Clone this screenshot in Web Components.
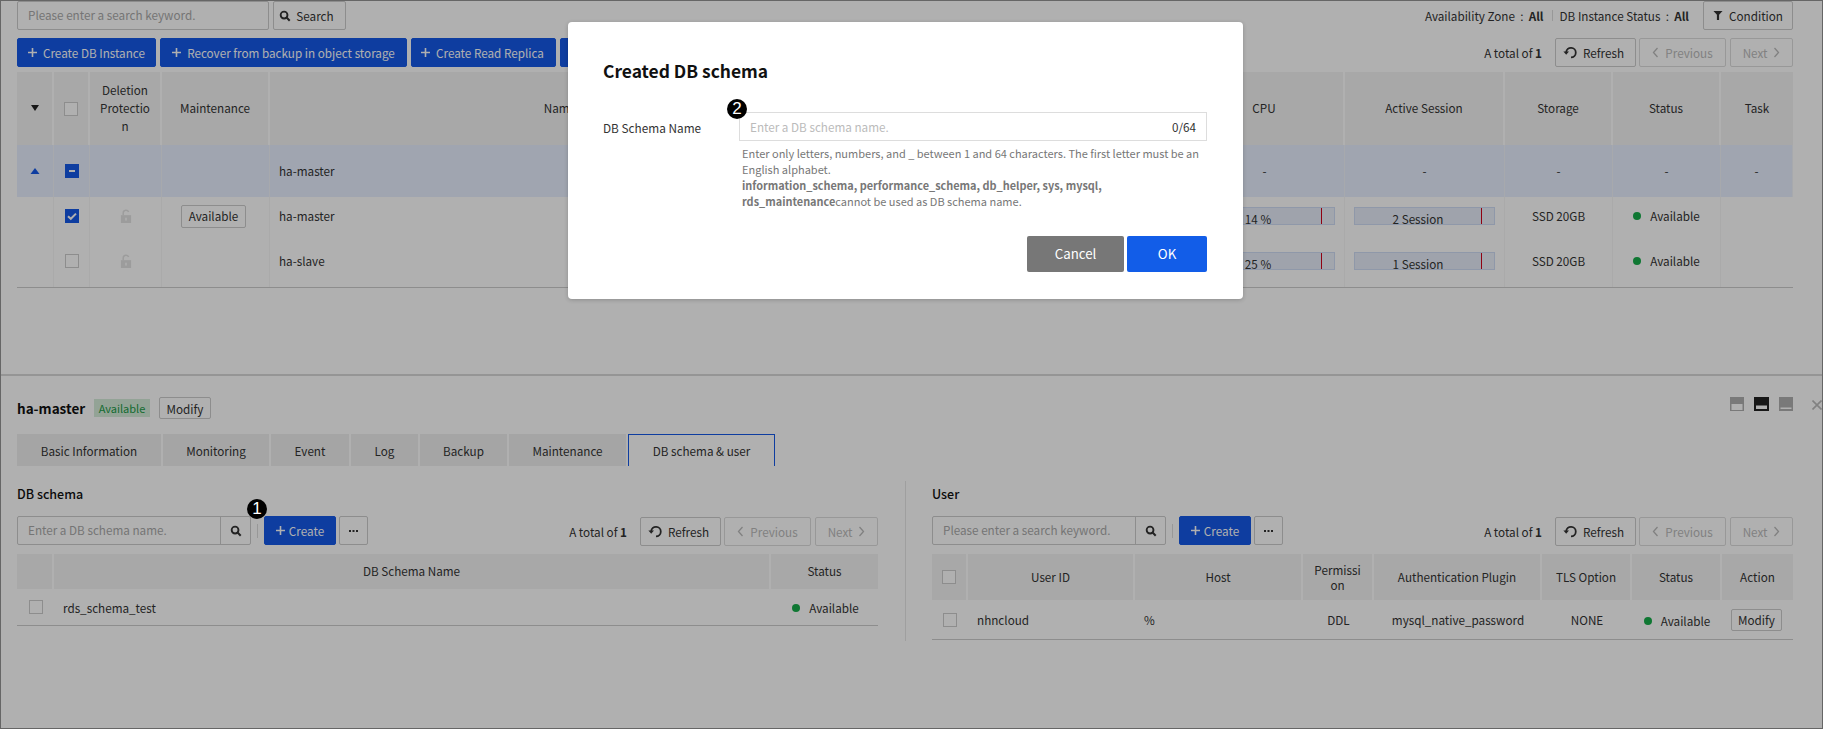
<!DOCTYPE html>
<html lang="en">
<head>
<meta charset="utf-8">
<title>DB schema</title>
<style>
html, body { margin: 0; padding: 0; }
body {
    width: 1823px;
    height: 729px;
    overflow: hidden;
    position: relative;
    background: #fff;
    color: #333;
    font-family: "Noto Sans CJK KR", "Noto Sans", sans-serif;
    font-size: 11.7px;
}
</style>
</head>
<body>
<script>
const ICONS = {
    plus: `<svg width="9" height="9" viewBox="0 0 9 9"><path d="M4.500 0v9M0 4.500h9" stroke="currentColor" stroke-width="1.6" fill="none"/></svg>`,
    search: `<svg width="12" height="12" viewBox="0 0 13 13"><circle cx="5.500" cy="5.500" r="3.700" stroke="currentColor" stroke-width="2" fill="none"/><path d="M8.200 8.200l3.400 3.400" stroke="currentColor" stroke-width="2.200"/></svg>`,
    filter: `<svg width="10" height="11" viewBox="0 0 11 12"><path d="M0.500 1h10L6.700 5.200V11H4.300V5.200z" fill="currentColor"/></svg>`,
    refresh: `<svg width="14" height="13" viewBox="0 0 14 13"><path d="M3.200 6.200A4.800 4.800 0 1 1 8 11.400" stroke="currentColor" stroke-width="1.800" fill="none"/><path d="M0.400 5.400h5.600L3.200 8.800z" fill="currentColor"/></svg>`,
    left: `<svg width="7" height="11" viewBox="0 0 7 11"><path d="M5.500 1L1.500 5.500l4 4.500" stroke="currentColor" stroke-width="1.300" fill="none"/></svg>`,
    right: `<svg width="7" height="11" viewBox="0 0 7 11"><path d="M1.500 1l4 4.500-4 4.500" stroke="currentColor" stroke-width="1.300" fill="none"/></svg>`,
    lock: `<svg width="12" height="14" viewBox="0 0 12 15"><path d="M3 7V4.200a3 3 0 0 1 5.800-1" stroke="#e3e3e3" stroke-width="1.600" fill="none"/><path d="M0.500 6.600h11V15H.5z" fill="#e3e3e3"/><rect x="5" y="9.400" width="2" height="3" fill="#f7f7f7"/></svg>`,
};

class UiBtn extends HTMLElement {
    constructor() {
        super();
        this.attachShadow({ mode: "open" }).innerHTML = `
        <style>
            :host {
                display: inline-flex;
                align-items: center;
                justify-content: center;
                gap: var(--gap, 6px);
                box-sizing: border-box;
                height: var(--h, 29px);
                padding: 0 var(--pad, 10px);
                background: #fff;
                border: 1px solid #ccc;
                border-radius: 2px;
                font-size: 11.7px;
                color: #333;
                white-space: nowrap;
            }
            :host([primary]) { background: #1559e8; border-color: #1559e8; color: #fff; }
            :host([off]) { color: #bbb; border-color: #ddd; }
        </style>
        <slot></slot>`;
    }
}
customElements.define("ui-btn", UiBtn);

class UiIcon extends HTMLElement {
    connectedCallback() {
        if (this.shadowRoot) return;
        this.attachShadow({ mode: "open" }).innerHTML = `
        <style>:host { display: inline-flex; align-items: center; } svg { display: block; }</style>
        ${ICONS[this.getAttribute("name")] || ""}`;
    }
}
customElements.define("ui-icon", UiIcon);

class UiCheck extends HTMLElement {
    connectedCallback() {
        if (this.shadowRoot) return;
        const state = this.getAttribute("state");
        const mark = state === "on"
            ? `<svg width="14" height="14" viewBox="0 0 14 14"><path d="M3 7.200l2.800 2.600L11 4.600" stroke="#fff" stroke-width="2" fill="none"/></svg>`
            : state === "part"
            ? `<svg width="14" height="14" viewBox="0 0 14 14"><path d="M4 7h6" stroke="#fff" stroke-width="2"/></svg>`
            : "";
        this.attachShadow({ mode: "open" }).innerHTML = `
        <style>
            :host {
                display: block;
                box-sizing: border-box;
                width: 14px;
                height: 14px;
                background: #fff;
                border: 1px solid #ccc;
            }
            :host([state]) { background: #1559e8; border: 0; }
            svg { display: block; }
        </style>${mark}`;
    }
}
customElements.define("ui-check", UiCheck);

class SearchBox extends HTMLElement {
    connectedCallback() {
        if (this.shadowRoot) return;
        this.attachShadow({ mode: "open" }).innerHTML = `
        <style>
            :host {
                display: flex;
                box-sizing: border-box;
                width: var(--w, 234px);
                height: 29px;
                background: #fff;
                border: 1px solid #ccc;
                border-radius: 2px;
                font-size: 11.7px;
                color: #aaa;
            }
            span { flex: 1; padding-left: var(--pl, 10px); line-height: 26px; white-space: nowrap; overflow: hidden; }
            b { width: 29px; border-left: 1px solid #ccc; display: flex; align-items: center; justify-content: center; color: #333; }
        </style>
        <span>${this.getAttribute("hint")}</span>${this.hasAttribute("plain") ? "" : `<b>${ICONS.search}</b>`}`;
    }
}
customElements.define("search-box", SearchBox);

class DataGrid extends HTMLElement {
    constructor() {
        super();
        this.attachShadow({ mode: "open" }).innerHTML = `
        <style>
            :host {
                display: grid;
                grid-template-columns: var(--cols);
                grid-template-rows: var(--rows);
                border-bottom: 1px solid #ccc;
                font-size: 11.7px;
            }
        </style>
        <slot></slot>`;
    }
}
customElements.define("data-grid", DataGrid);

class GridCell extends HTMLElement {
    constructor() {
        super();
        this.attachShadow({ mode: "open" }).innerHTML = `
        <style>
            :host {
                display: flex;
                align-items: center;
                justify-content: center;
                box-sizing: border-box;
                min-width: 0;
                text-align: center;
                line-height: 18px;
                color: #333;
            }
            :host([head]) { background: #f4f4f4; border-right: 2px solid #fff; padding: 0 8px 1px; overflow-wrap: anywhere; }
            :host([head][last]) { border-right: 0; }
            :host([sel]) { background: #e8f0ff; border-right: 1px solid #f2f5fb; }
            :host([line]) { border-right: 1px solid #f6f6f6; }
            :host([up]) { padding-bottom: 7px; }
            :host([left]) { justify-content: flex-start; padding-left: var(--cell-pad, 9px); }
        </style>
        <slot></slot>`;
    }
}
customElements.define("g-c", GridCell);

class UsageBar extends HTMLElement {
    constructor() {
        super();
        this.attachShadow({ mode: "open" }).innerHTML = `
        <style>
            :host {
                display: block;
                box-sizing: border-box;
                width: 141px;
                height: 18px;
                border: 1px solid #cfdcf5;
                background: #ebf1fb;
                font-size: 11.7px;
                color: #333;
            }
            div {
                box-sizing: border-box;
                width: calc(90% + 2px);
                height: 16px;
                background: #e6edf9;
                border-right: 1px solid #d0021b;
                text-align: center;
                line-height: 22px;
                overflow: hidden;
            }
        </style>
        <div><slot></slot></div>`;
    }
}
customElements.define("usage-bar", UsageBar);

class StatusDot extends HTMLElement {
    constructor() {
        super();
        this.attachShadow({ mode: "open" }).innerHTML = `
        <style>
            :host { display: inline-flex; align-items: center; gap: 9px; }
            i { width: 8px; height: 8px; border-radius: 50%; background: #17ad4a; }
        </style>
        <i></i><slot></slot>`;
    }
}
customElements.define("status-dot", StatusDot);

class DetailTabs extends HTMLElement {
    constructor() {
        super();
        this.attachShadow({ mode: "open" }).innerHTML = `
        <style>
            :host { display: flex; gap: 2px; height: 32px; }
        </style>
        <slot></slot>`;
    }
}
customElements.define("detail-tabs", DetailTabs);

class DetailTab extends HTMLElement {
    constructor() {
        super();
        this.attachShadow({ mode: "open" }).innerHTML = `
        <style>
            :host {
                display: flex;
                align-items: center;
                justify-content: center;
                box-sizing: border-box;
                background: #f0f0f0;
                font-size: 11.7px;
                color: #333;
            }
            :host([active]) {
                background: #fff;
                border: 1px solid #1559e8;
                border-bottom: 0;
            }
        </style>
        <slot></slot>`;
    }
}
customElements.define("detail-tab", DetailTab);

class ListTools extends HTMLElement {
    connectedCallback() {
        if (this.shadowRoot) return;
        this.attachShadow({ mode: "open" }).innerHTML = `
        <style>
            :host { display: flex; align-items: center; height: 29px; font-size: 11.7px; color: #333; }
            .grow { flex: 1; display: flex; align-items: center; }
            .sep { width: 1px; height: 14px; background: #ddd; margin: 0 6px; }
            .total { margin: 2px 13px 0 0; }
            .total b { font-weight: 700; }
            ui-btn { --pad: 0; }
            .ref { width: 81px; margin: 1px 3px 0 0; padding-right: 4px; }
            .prev { width: 87px; margin: 1px 4px 0 0; }
            .next { width: 63px; margin-top: 1px; }
            .more { width: 29px; margin-left: 3px; }
            .create { width: 72px; --gap: 4px; }
        </style>
        <div class="grow">
            <search-box hint="${this.getAttribute("hint")}"></search-box>
            <span class="sep"></span>
            <ui-btn class="create" primary><ui-icon name="plus"></ui-icon>Create</ui-btn>
            <ui-btn class="more"><svg width="9" height="2" viewBox="0 0 9 2"><path d="M0 0h2v2H0zM3.500 0h2v2h-2zM7 0h2v2H7z" fill="#333"/></svg></ui-btn>
        </div>
        <span class="total">A total of <b>1</b></span>
        <ui-btn class="ref"><ui-icon name="refresh"></ui-icon>Refresh</ui-btn>
        <ui-btn class="prev" off><ui-icon name="left"></ui-icon>Previous</ui-btn>
        <ui-btn class="next" off>Next<ui-icon name="right"></ui-icon></ui-btn>`;
    }
}
customElements.define("list-tools", ListTools);

class InstancePanel extends HTMLElement {
    constructor() {
        super();
        this.attachShadow({ mode: "open" }).innerHTML = `
        <style>
            :host {
                display: block;
                box-sizing: border-box;
                height: 374px;
                padding: 1px 30px 0 17px;
                font-size: 11.7px;
            }
            .top { display: flex; align-items: center; gap: 4px; height: 29px; }
            .top .fill { flex: 1; }
            .info { display: flex; align-items: center; color: #333; }
            .info b { font-weight: 700; }
            .info i { width: 1px; height: 11px; background: #ddd; margin: 0 7px 0 8px; }
            .actions { display: flex; align-items: center; gap: 4px; height: 29px; margin-top: 8px; }
            .actions .fill { flex: 1; }
            .actions ui-btn { --pad: 0; }
            .actions .total { margin-right: 9px; }
            .actions .total b { font-weight: 700; }
            .tbl { margin-top: 5px; }
        </style>
        <div class="top">
            <search-box plain hint="Please enter a search keyword." style="--w:252px"></search-box>
            <ui-btn style="width:73px;--gap:5px;padding:0 6px 0 0"><ui-icon name="search"></ui-icon>Search</ui-btn>
            <span class="fill"></span>
            <span class="info">Availability Zone&nbsp;&nbsp;:&nbsp;&nbsp;<b>All</b><i></i>DB Instance Status&nbsp;&nbsp;:&nbsp;&nbsp;<b>All</b></span>
            <ui-btn style="width:90px;margin-left:10px"><ui-icon name="filter"></ui-icon>Condition</ui-btn>
        </div>
        <div class="actions">
            <ui-btn primary style="width:139px"><ui-icon name="plus"></ui-icon>Create DB Instance</ui-btn>
            <ui-btn primary style="width:247px"><ui-icon name="plus"></ui-icon>Recover from backup in object storage</ui-btn>
            <ui-btn primary style="width:145px;padding-right:2px"><ui-icon name="plus"></ui-icon>Create Read Replica</ui-btn>
            <ui-btn primary style="width:60px"></ui-btn>
            <span class="fill"></span>
            <span class="total">A total of <b>1</b></span>
            <ui-btn style="width:81px;margin-right:-1px;padding-right:4px"><ui-icon name="refresh"></ui-icon>Refresh</ui-btn>
            <ui-btn off style="width:87px"><ui-icon name="left"></ui-icon>Previous</ui-btn>
            <ui-btn off style="width:63px">Next<ui-icon name="right"></ui-icon></ui-btn>
        </div>
        <div class="tbl"><slot></slot></div>`;
    }
}
customElements.define("instance-panel", InstancePanel);

class DetailPanel extends HTMLElement {
    constructor() {
        super();
        this.attachShadow({ mode: "open" }).innerHTML = `
        <style>
            :host {
                display: block;
                box-sizing: border-box;
                height: 355px;
                border-top: 2px solid #d8d8d8;
                padding: 21px 30px 0 17px;
                position: relative;
            }
            .head { display: flex; align-items: center; height: 22px; }
            .name { font-size: 13.5px; font-weight: 700; color: #111; width: 77px; }
            .badge {
                background: #d5edda;
                color: #1a9b46;
                font-size: 11px;
                height: 18px;
                line-height: 18px;
                width: 56px;
                text-align: center;
                margin-right: 9px;
            }
            .head ui-btn { --h: 22px; --pad: 0; width: 52px; }
            .win { margin-left: auto; display: flex; gap: 10px; align-self: flex-start; }
            .win svg { display: block; }
            .x { position: absolute; right: 1px; top: 24px; }
            .tabs { margin-top: 15px; }
            .cols { display: grid; grid-template-columns: 861px 1fr; margin-top: 15px; }
            .right { margin-left: 27px; border-left: 1px solid #e6e6e6; padding-left: 26px; height: 160px; }
            h3 { margin: 0 0 13px; font-size: 12.5px; font-weight: 500; color: #111; line-height: 26px; height: 22px; }
            ::slotted([slot="left"]), ::slotted([slot="right"]) { display: block; }
        </style>
        <div class="head">
            <span class="name">ha-master</span>
            <span class="badge">Available</span>
            <ui-btn>Modify</ui-btn>
            <span class="win">
                <svg width="14" height="14" viewBox="0 0 14 14"><rect width="14" height="14" fill="#b0b0b0"/><rect x="1.500" y="7" width="11" height="6" fill="#fff"/></svg>
                <svg width="15" height="14" viewBox="0 0 15 14"><rect width="15" height="14" fill="#222"/><rect x="2" y="8.500" width="11" height="3.500" fill="#fff"/></svg>
                <svg width="14" height="14" viewBox="0 0 14 14"><rect width="14" height="14" fill="#b0b0b0"/><rect x="1.500" y="10.500" width="11" height="1.500" fill="#fff"/></svg>
            </span>
            <svg class="x" width="10" height="10" viewBox="0 0 10 10"><path d="M0.500 0.500l9 9M9.500 0.500l-9 9" stroke="#bbb" stroke-width="1.600"/></svg>
        </div>
        <div class="tabs"><slot name="tabs"></slot></div>
        <div class="cols">
            <div><h3>DB schema</h3><slot name="left"></slot></div>
            <div class="right"><h3>User</h3><slot name="right"></slot></div>
        </div>`;
    }
}
customElements.define("detail-panel", DetailPanel);

class SchemaDialog extends HTMLElement {
    constructor() {
        super();
        this.attachShadow({ mode: "open" }).innerHTML = `
        <style>
            :host {
                position: absolute;
                left: 568px;
                top: 22px;
                width: 675px;
                height: 277px;
                box-sizing: border-box;
                padding: 36px 36px 0 35px;
                background: #fff;
                border-radius: 4px;
                box-shadow: 0 1px 4px rgba(0,0,0,.2);
                color: #333;
            }
            h2 { margin: 0; font-size: 17.4px; font-weight: 700; color: #111; line-height: 26px; }
            .form { display: grid; grid-template-columns: 136px 1fr; margin-top: 28px; }
            label { font-size: 11.8px; line-height: 31px; color: #333; }
            .input {
                display: flex;
                justify-content: space-between;
                align-items: center;
                box-sizing: border-box;
                height: 29px;
                padding: 0 10px;
                border: 1px solid #ddd;
                font-size: 11.7px;
                color: #bbb;
            }
            .input em { font-style: normal; color: #333; }
            .hint { margin: 4px 3px 0; font-size: 11px; line-height: 16px; color: #777; }
            .hint b { font-weight: 700; font-size: 10.9px; }
            .foot { display: flex; justify-content: flex-end; gap: 3px; margin-top: 27px; }
            .foot div {
                height: 36px;
                line-height: 36px;
                text-align: center;
                border-radius: 2px;
                color: #fff;
                font-size: 13.3px;
            }
            .cancel { width: 97px; background: #777; }
            .ok { width: 80px; background: #125de8; }
        </style>
        <h2>Created DB schema</h2>
        <div class="form">
            <label>DB Schema Name</label>
            <div>
                <div class="input"><span>Enter a DB schema name.</span><em>0/64</em></div>
                <p class="hint">Enter only letters, numbers, and _ between 1 and 64 characters. The first letter must be an English alphabet.<br>
                <b>information_schema, performance_schema, db_helper, sys, mysql,</b><br><b>rds_maintenance</b>cannot be used as DB schema name.</p>
            </div>
        </div>
        <div class="foot"><div class="cancel">Cancel</div><div class="ok">OK</div></div>`;
    }
}
customElements.define("schema-dialog", SchemaDialog);

class StepMark extends HTMLElement {
    constructor() {
        super();
        this.attachShadow({ mode: "open" }).innerHTML = `
        <style>
            :host {
                position: absolute;
                width: 20px;
                height: 20px;
                border-radius: 50%;
                background: #000;
                color: #fff;
                font-family: "Liberation Sans", sans-serif;
                font-size: 17px;
                line-height: 20px;
                text-align: center;
            }
        </style>
        <slot></slot>`;
    }
}
customElements.define("step-mark", StepMark);

class DimLayer extends HTMLElement {
    constructor() {
        super();
        this.attachShadow({ mode: "open" }).innerHTML = `
        <style>
            :host {
                position: absolute;
                inset: 0;
                background: rgba(0,0,0,.31);
                border: 1px solid #666;
                box-sizing: border-box;
            }
        </style>`;
    }
}
customElements.define("dim-layer", DimLayer);
</script>

<instance-panel>
    <data-grid style="--cols:37px 36px 72px 108px 582px 333px 160px 160px 108px 108px 72px;--rows:73px 52px 45px 45px">
        <g-c head><svg width="10" height="6" viewBox="0 0 10 6"><path d="M1 0h8L5 6z" fill="#222"/></svg></g-c>
        <g-c head style="padding:0"><ui-check></ui-check></g-c>
        <g-c head>Deletion Protection</g-c>
        <g-c head>Maintenance</g-c>
        <g-c head>Name</g-c>
        <g-c head></g-c>
        <g-c head>CPU</g-c>
        <g-c head>Active Session</g-c>
        <g-c head>Storage</g-c>
        <g-c head>Status</g-c>
        <g-c head last>Task</g-c>

        <g-c sel><svg width="10" height="6" viewBox="0 0 10 6"><path d="M5 0l4.500 6h-9z" fill="#1559e8"/></svg></g-c>
        <g-c sel><ui-check state="part"></ui-check></g-c>
        <g-c sel></g-c>
        <g-c sel></g-c>
        <g-c sel left>ha-master</g-c>
        <g-c sel></g-c>
        <g-c sel>-</g-c>
        <g-c sel>-</g-c>
        <g-c sel>-</g-c>
        <g-c sel>-</g-c>
        <g-c sel>-</g-c>

        <g-c line></g-c>
        <g-c line up><ui-check state="on"></ui-check></g-c>
        <g-c line up><ui-icon name="lock"></ui-icon></g-c>
        <g-c line up><ui-btn style="--h:23px;--pad:0;width:65px;margin-right:4px">Available</ui-btn></g-c>
        <g-c line up left>ha-master</g-c>
        <g-c line></g-c>
        <g-c line up><usage-bar>14 %</usage-bar></g-c>
        <g-c line up><usage-bar>2 Session</usage-bar></g-c>
        <g-c line up>SSD 20GB</g-c>
        <g-c line up><status-dot>Available</status-dot></g-c>
        <g-c></g-c>

        <g-c line></g-c>
        <g-c line up><ui-check></ui-check></g-c>
        <g-c line up><ui-icon name="lock"></ui-icon></g-c>
        <g-c line></g-c>
        <g-c line up left>ha-slave</g-c>
        <g-c line></g-c>
        <g-c line up><usage-bar>25 %</usage-bar></g-c>
        <g-c line up><usage-bar>1 Session</usage-bar></g-c>
        <g-c line up>SSD 20GB</g-c>
        <g-c line up><status-dot>Available</status-dot></g-c>
        <g-c></g-c>
    </data-grid>
</instance-panel>

<detail-panel>
    <detail-tabs slot="tabs">
        <detail-tab style="width:144px">Basic Information</detail-tab>
        <detail-tab style="width:106px">Monitoring</detail-tab>
        <detail-tab style="width:78px">Event</detail-tab>
        <detail-tab style="width:67px">Log</detail-tab>
        <detail-tab style="width:87px">Backup</detail-tab>
        <detail-tab style="width:117px">Maintenance</detail-tab>
        <detail-tab active style="width:147px">DB schema &amp; user</detail-tab>
    </detail-tabs>

    <div slot="left">
        <list-tools hint="Enter a DB schema name."></list-tools>
        <data-grid style="margin-top:9px;--cols:37px 717px 107px;--rows:35px 36px">
            <g-c head></g-c>
            <g-c head>DB Schema Name</g-c>
            <g-c head last>Status</g-c>
            <g-c><ui-check></ui-check></g-c>
            <g-c left style="padding-top:1px">rds_schema_test</g-c>
            <g-c style="padding:1px 0 0 2px"><status-dot>Available</status-dot></g-c>
        </data-grid>
    </div>

    <div slot="right">
        <list-tools hint="Please enter a search keyword."></list-tools>
        <data-grid style="margin-top:9px;--cols:36px 167px 168px 71px 168px 90px 90px 71px;--rows:46px 39px">
            <g-c head style="padding:0"><ui-check></ui-check></g-c>
            <g-c head>User ID</g-c>
            <g-c head>Host</g-c>
            <g-c head style="line-height:15px">Permission</g-c>
            <g-c head style="padding:0">Authentication Plugin</g-c>
            <g-c head style="padding:0">TLS Option</g-c>
            <g-c head>Status</g-c>
            <g-c head last>Action</g-c>
            <g-c><ui-check></ui-check></g-c>
            <g-c left>nhncloud</g-c>
            <g-c left>%</g-c>
            <g-c>DDL</g-c>
            <g-c>mysql_native_password</g-c>
            <g-c>NONE</g-c>
            <g-c style="padding-top:3px"><status-dot>Available</status-dot></g-c>
            <g-c><ui-btn style="--h:22px;--pad:0;width:51px;margin-right:2px">Modify</ui-btn></g-c>
        </data-grid>
    </div>
</detail-panel>

<dim-layer></dim-layer>
<schema-dialog></schema-dialog>
<step-mark style="left:247px;top:499px">1</step-mark>
<step-mark style="left:727px;top:99px">2</step-mark>
</body>
</html>
